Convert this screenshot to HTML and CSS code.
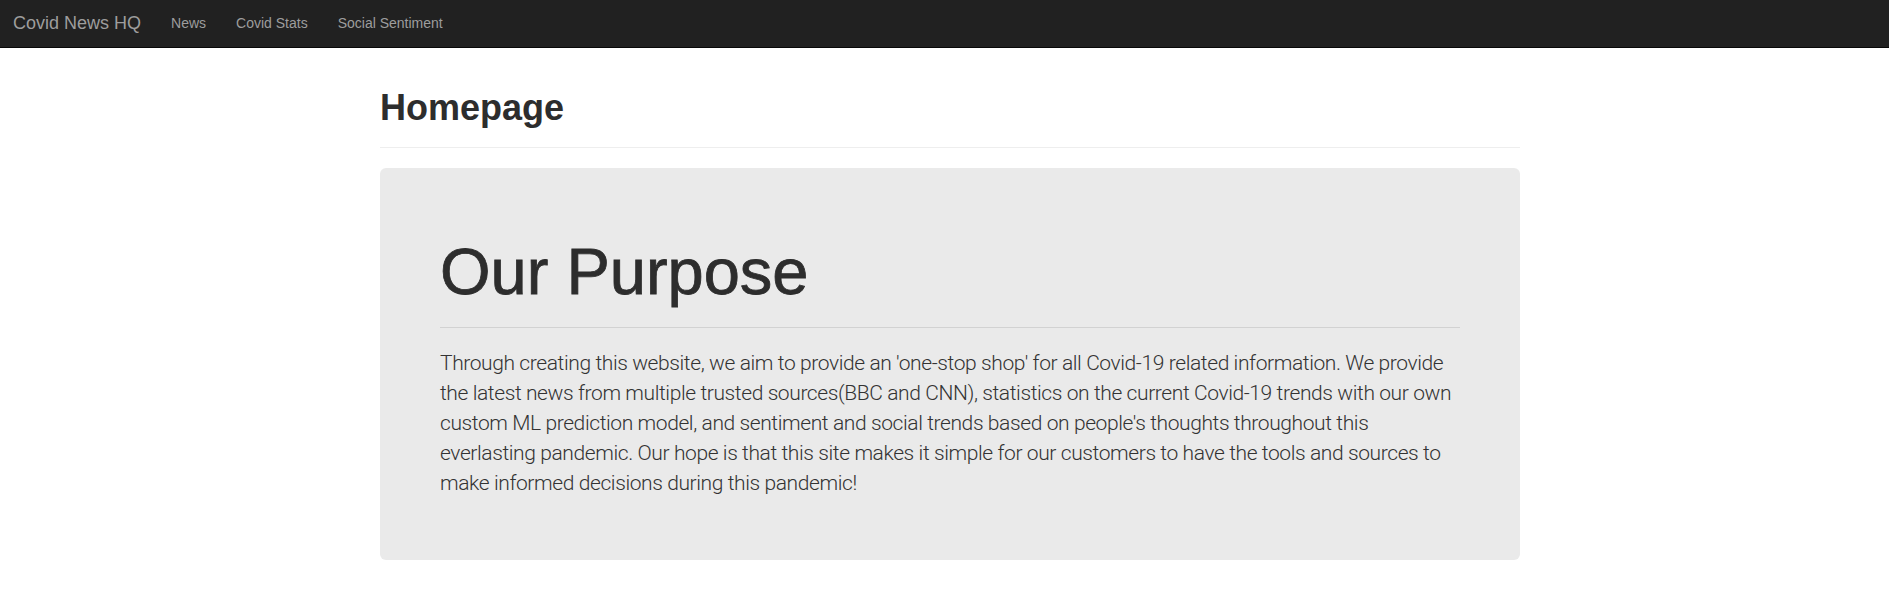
FILE: index.html
```html
<!DOCTYPE html>
<html lang="en">
<head>
<meta charset="utf-8">
<title>Covid News HQ</title>
<link rel="stylesheet" href="styles.css">
</head>
<body>
<nav class="navbar">
  <a class="brand" href="#">Covid News HQ</a>
  <ul class="nav-links">
    <li><a href="#">News</a></li>
    <li><a href="#">Covid Stats</a></li>
    <li><a href="#">Social Sentiment</a></li>
  </ul>
</nav>
<main class="page">
  <div class="container">
    <div class="page-header">
      <h1 class="page-title">Homepage</h1>
    </div>
    <section class="jumbotron">
      <h1 class="jumbo-title">Our Purpose</h1>
      <hr class="jumbo-rule">
      <p class="jumbo-text">Through creating this website, we aim to provide an 'one-stop shop' for all Covid-19 related information. We provide the latest news from multiple trusted sources(BBC and CNN), statistics on the current Covid-19 trends with our own custom ML prediction model, and sentiment and social trends based on people's thoughts throughout this everlasting pandemic. Our hope is that this site makes it simple for our customers to have the tools and sources to make informed decisions during this pandemic!</p>
    </section>
  </div>
</main>
</body>
</html>
```

FILE: styles.css
```css
* { box-sizing: border-box; }

html, body {
  margin: 0;
  padding: 0;
  background: #ffffff;
  color: #333333;
  font-family: "Liberation Sans", Arial, sans-serif;
  font-size: 14px;
  line-height: 1.42857;
}

a { text-decoration: none; }

.navbar {
  display: flex;
  align-items: center;
  height: 48px;
  padding: 0 0 1px 0;
  background: #212121;
  border-bottom: 1px solid #080808;
}

.brand {
  padding: 0 15px 0 13px;
  font-size: 18px;
  line-height: 20px;
  color: #9d9d9d;
}

.nav-links {
  display: flex;
  list-style: none;
  margin: 0;
  padding: 0;
}

.nav-links a {
  display: block;
  padding: 0 15px;
  font-size: 14px;
  line-height: 20px;
  color: #9d9d9d;
}

.page {
  padding-left: 11px;
}

.container {
  width: 1140px;
  margin: 0 auto;
}

.page-header {
  margin: 40px 0 20px;
  padding-bottom: 9px;
  border-bottom: 1px solid #eeeeee;
}

.page-title {
  margin: 0 0 10px;
  font-size: 36px;
  font-weight: 700;
  line-height: 1.1;
  color: #2d2d2d;
}

.jumbotron {
  padding: 48px 60px 47px;
  background: #eaeaea;
  border-radius: 6px;
}

.jumbo-title {
  margin: 20px 0 20px;
  font-size: 65px;
  font-weight: 400;
  line-height: 1.1;
  color: #2d2d2d;
  -webkit-text-stroke: 0.8px #2d2d2d;
}

.jumbo-rule {
  margin: 0 0 20px;
  border: 0;
  border-top: 1px solid #d2d2d2;
}

.jumbo-text {
  margin: 0 0 15px;
  font-family: Roboto, "Liberation Sans", sans-serif;
  font-size: 21px;
  font-weight: 300;
  line-height: 30px;
  letter-spacing: -0.4px;
  color: #333333;
}
```
